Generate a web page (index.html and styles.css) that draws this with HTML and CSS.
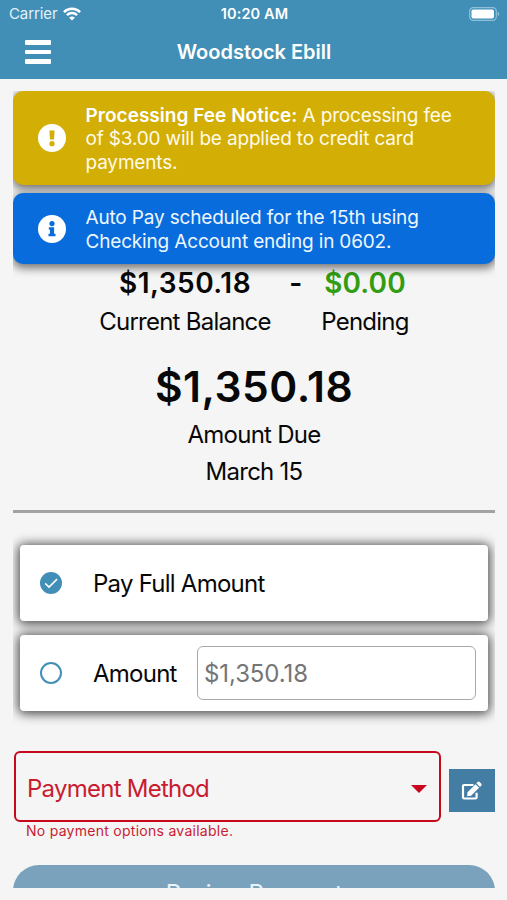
FILE: index.html
```
<!DOCTYPE html>
<html lang="en">
<head>
<meta charset="utf-8">
<title>Woodstock Ebill</title>
<link rel="stylesheet" href="styles.css">
</head>
<body>
<header class="header">
  <div class="status">
    <div class="carrier"><span>Carrier</span>
      <svg class="wifi" viewBox="0 0 18 14"><g fill="none" stroke="#fff" stroke-width="2.5"><path d="M.9 5.1C5.4.7 12.6.7 17.1 5.1"/><path d="M3.9 8.1c2.9-2.7 7.3-2.7 10.2 0"/></g><path fill="#fff" d="M9 13.6 6.1 10.7c1.6-1.5 4.2-1.5 5.8 0z"/></svg>
    </div>
    <div class="clock">10:20 AM</div>
    <svg class="battery" viewBox="0 0 31 14"><rect x=".7" y=".7" width="26.6" height="12.6" rx="3.6" fill="none" stroke="#8fbfd9" stroke-width="1.2"/><rect x="2.5" y="2.5" width="22.5" height="9" rx="1.8" fill="#fff"/><path d="M28.7 4.8c2 .7 2 3.7 0 4.4z" fill="#8fbfd9"/></svg>
  </div>
  <div class="bar">
    <button class="menu" aria-label="Menu"><i></i><i></i><i></i></button>
    <h1 class="title">Woodstock Ebill</h1>
  </div>
</header>
<main class="content">
  <section class="alert warning">
    <svg class="alert-icon" viewBox="0 0 28 28"><circle cx="14" cy="14" r="14" fill="#fff"/><path fill="#d3ae05" d="M11.4 6.5h5.2l-.6 9.1h-4z"/><circle cx="14" cy="19.7" r="2.6" fill="#d3ae05"/></svg>
    <p><b>Processing Fee Notice:</b> A processing fee<br>of $3.00 will be applied to credit card<br>payments.</p>
  </section>
  <section class="alert info">
    <svg class="alert-icon" viewBox="0 0 28 28"><circle cx="14" cy="14" r="14" fill="#fff"/><circle cx="14" cy="8.6" r="2.6" fill="#096cdc"/><path fill="#096cdc" d="M10.8 12.2h5.3v6.6h1.4v2.4h-7v-2.4h1.4v-4.2h-1.1z"/></svg>
    <p>Auto Pay scheduled for the 15th using<br>Checking Account ending in 0602.</p>
  </section>
  <section class="balances">
    <div class="balance current"><strong>$1,350.18</strong><span>Current Balance</span></div>
    <strong class="dash">-</strong>
    <div class="balance pending"><strong>$0.00</strong><span>Pending</span></div>
  </section>
  <section class="due">
    <strong>$1,350.18</strong>
    <span>Amount Due</span>
    <span class="date">March 15</span>
  </section>
  <hr class="rule">
  <section class="options">
    <label class="option">
      <svg class="radio" viewBox="0 0 22 22"><circle cx="11" cy="11" r="11" fill="#418fb7"/><path d="m5.2 11.4 3.8 3.7 8-8" fill="none" stroke="#fff" stroke-width="1.5"/></svg>
      <span class="full">Pay Full Amount</span>
    </label>
    <label class="option">
      <svg class="radio" viewBox="0 0 22 22"><circle cx="11" cy="11" r="10" fill="none" stroke="#418fb7" stroke-width="2"/></svg>
      <span class="amount">Amount</span>
      <span class="field">$1,350.18</span>
    </label>
  </section>
  <section class="method">
    <div class="select"><span>Payment Method</span><svg class="caret" viewBox="0 0 16 8"><path d="M0 0h16L8 8z" fill="#c8091d"/></svg></div>
    <button class="edit" aria-label="Edit"><svg viewBox="0 0 22 20"><path d="M12.5 4H3.2Q2 4 2 5.2v11.1q0 1.2 1.2 1.2h11.2q1.2 0 1.2-1.2v-4.5" fill="none" stroke="#fff" stroke-width="2.2"/><path d="m6.5 11.2 8-8 3.6 3.6-8 8-4 .5zM15.4 2.3l1.3-1.3q1-.9 1.9 0l1.7 1.7q.9 1 0 1.9L19 5.9z" fill="#fff"/></svg></button>
  </section>
  <p class="error">No payment options available.</p>
  <button class="submit"><span>Review Payment</span></button>
</main>
</body>
</html>
```

FILE: styles.css
```
* { box-sizing: border-box; }
body {
  margin: 0;
  height: 900px;
  overflow: hidden;
  background: #f5f5f5;
  color: #080808;
  font-family: Inter, "Liberation Sans", sans-serif;
  font-size: 24px;
}
p, h1 { margin: 0; }
button { border: 0; padding: 0; font-family: inherit; }
span, strong { white-space: nowrap; }
.header { height: 79px; background: #418fb7; color: #fff; }
.status {
  height: 27px;
  display: grid;
  grid-template-columns: 1fr auto 1fr;
  align-items: center;
  padding: 0 7px 0 9px;
  font-size: 15px;
}
.carrier { display: flex; align-items: center; gap: 6px; color: #e2f1f9; letter-spacing: -.1px; }
.wifi { width: 18px; height: 14px; }
.clock { font-weight: 600; font-size: 14.5px; letter-spacing: .15px; }
.battery { width: 31px; height: 14px; justify-self: end; }
.bar { height: 50px; display: grid; grid-template-columns: 88px 1fr 88px; align-items: center; }
.menu {
  width: 26px;
  margin-left: 25px;
  background: none;
  display: grid;
  gap: 4.5px;
}
.menu i { height: 4.7px; border-radius: 1px; background: #fff; }
.title { text-align: center; font-size: 20px; font-weight: 600; padding-left: 1px; }
.content {
  height: 797px;
  margin: 12px 12px 0 13px;
  overflow: hidden;
  letter-spacing: -.75px;
}
.alert {
  display: flex;
  align-items: center;
  border-radius: 10px;
  padding: 0 0 0 25px;
  color: #fff;
  font-size: 19px;
  line-height: 23.2px;
  letter-spacing: -.17px;
  box-shadow: 0 3px 10px 1px rgba(0, 0, 0, .55);
}
.alert p { padding-top: 2px; }
.alert-icon { width: 28px; height: 28px; flex: none; margin-right: 19.5px; }
.warning { height: 94px; background: #d3ae05; color: #fffbe8; margin-bottom: 8px; }
.info { height: 71px; background: #096cdc; color: #edf7ff; position: relative; }
.warning b { font-weight: 600; color: #fff; letter-spacing: .03px; }
.balances { height: 93px; display: flex; align-items: flex-start; padding: 1px 0 0 86px; }
.balance { display: flex; flex-direction: column; align-items: center; }
.balance strong, .dash { font-size: 28px; font-weight: 600; line-height: 36px; letter-spacing: .5px; }
.balance span { line-height: 42px; }
.current { width: 172px; }
.dash { width: 50px; text-align: center; }
.pending { width: 88px; }
.balance.pending strong { color: #329d13; letter-spacing: .1px; }
.due { height: 153px; display: flex; flex-direction: column; align-items: center; padding-top: 2px; }
.due strong { font-size: 42.5px; line-height: 56px; font-weight: 600; letter-spacing: .5px; }
.due span { line-height: 37px; }
.due strong + span { margin-top: 1px; }
.rule { margin: 0; height: 3px; border: 0; background: #a2a2a2; }
.options { padding: 32px 7px 0; display: grid; gap: 14px; }
.option {
  height: 76px;
  display: flex;
  align-items: center;
  background: #fff;
  border-radius: 4px;
  padding: 0 12px 0 20px;
  box-shadow: 0 1px 11px 2px rgba(0, 0, 0, .7);
}
.radio { width: 22px; height: 22px; flex: none; margin-right: 31px; }
.amount { width: 104px; }
.field {
  flex: 1;
  height: 54px;
  border: 1px solid #a9a9a9;
  border-radius: 6px;
  padding-left: 6px;
  line-height: 53px;
  letter-spacing: -.1px;
  color: #757575;
}
.method { display: flex; align-items: center; margin: 40px 0 0 1px; height: 71px; color: #c91c30; }
.select {
  width: 427px;
  height: 71px;
  display: flex;
  align-items: center;
  justify-content: space-between;
  border: 2px solid #c8091d;
  border-radius: 6px;
  padding: 4px 12px 0 11px;
}
.caret { width: 16px; height: 8px; }
.edit { width: 46px; height: 43px; margin: 8px 0 0 8px; background: #437da4; flex: none; display: grid; place-items: center; }
.edit svg { width: 22px; height: 20px; }
.error { margin-left: 13px; height: 43px; color: #c91c30; font-size: 14px; line-height: 18px; letter-spacing: .27px; }
.submit {
  width: 100%;
  height: 56px;
  border-radius: 26px;
  background: #7aa2bd;
  color: #e8f3fa;
  font-size: 24px;
  letter-spacing: -.75px;
}
```
